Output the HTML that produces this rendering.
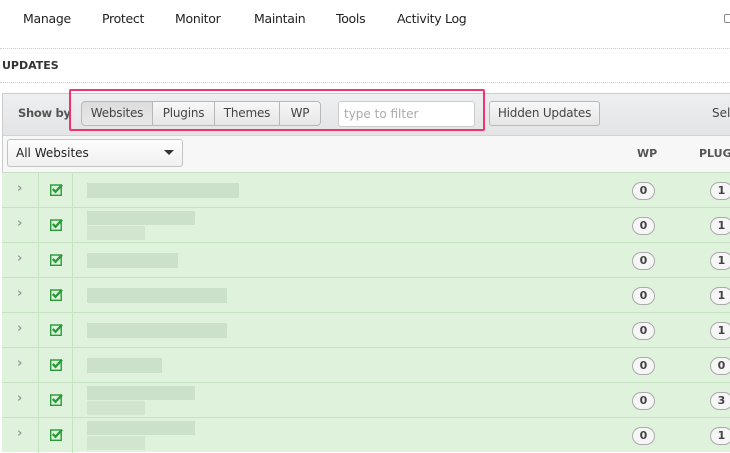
<!DOCTYPE html>
<html><head><meta charset="utf-8"><style>
*{margin:0;padding:0;box-sizing:border-box}
body{width:730px;height:450px;overflow:hidden;background:#fff;font-family:"DejaVu Sans","Liberation Sans",sans-serif;color:#333;position:relative}
.a{position:absolute}
.nav{font-size:12.5px;top:11px;color:#222;letter-spacing:-0.3px}
.dot{left:0;width:730px;border-top:1px dotted #ccc}
.btn{position:absolute;top:101px;height:25px;border:1px solid #b8b8b8;background:linear-gradient(#f7f7f7,#e6e6e6);font-size:12px;line-height:23px;text-align:center;color:#444;letter-spacing:-0.2px}
.row{position:absolute;left:2px;width:728px;height:35px;background:#dff3dc;border-top:1px solid #c8e2c4}
.c1{position:absolute;left:36px;top:0;height:35px;border-left:1px solid #c8e2c4}
.c2{position:absolute;left:70px;top:0;height:35px;border-left:1px solid #c8e2c4}
.arr{position:absolute;left:15px;top:8px;font-size:13px;color:#999;font-weight:bold}
.chk{position:absolute;left:48px;top:10px;width:13px;height:13px}
.bg{position:absolute;width:23px;height:18px;border:1px solid #aaa;border-radius:9px;background:#f6f6f6;font-size:11px;font-weight:bold;text-align:center;line-height:16px;color:#444;top:9px}
.bl{position:absolute;background:#c6dbc4}
</style></head><body>
<div class="a nav" style="left:23px">Manage</div>
<div class="a nav" style="left:102px">Protect</div>
<div class="a nav" style="left:175px">Monitor</div>
<div class="a nav" style="left:254px">Maintain</div>
<div class="a nav" style="left:336px">Tools</div>
<div class="a nav" style="left:397px">Activity Log</div>
<div class="a" style="left:724px;top:14px;width:8px;height:9px;border:1px solid #888;border-radius:2px"></div>
<div class="a dot" style="top:48px"></div>
<div class="a" style="left:2px;top:59px;font-size:11px;font-weight:bold;color:#333">UPDATES</div>
<div class="a dot" style="top:82px"></div>
<div class="a" style="left:2px;top:93px;width:728px;height:43px;background:linear-gradient(#eeeff0,#e3e4e5);border-top:1px solid #ccc;border-left:1px solid #ccc;border-bottom:1px solid #d4d4d4"></div>
<div class="a" style="left:18px;top:106px;font-size:11.5px;font-weight:bold;color:#555;letter-spacing:-0.3px">Show by</div>
<div class="btn" style="left:81px;width:72px;background:linear-gradient(#dcdcdc,#e8e8e8);border-radius:4px 0 0 4px">Websites</div>
<div class="btn" style="left:152px;width:63px">Plugins</div>
<div class="btn" style="left:214px;width:66px">Themes</div>
<div class="btn" style="left:279px;width:42px;border-radius:0 4px 4px 0">WP</div>
<div class="a" style="left:338px;top:101px;width:137px;height:26px;border:1px solid #ccc;background:#fff;border-radius:3px;font-size:12px;color:#aaa;padding:5px 5px">type to filter</div>
<div class="btn" style="left:489px;width:111px;border-radius:3px">Hidden Updates</div>
<div class="a" style="left:712px;top:106px;font-size:12px;color:#444">Sele</div>
<div class="a" style="left:69px;top:89px;width:416px;height:42px;border:2px solid #f0336f;border-radius:2px"></div>
<div class="a" style="left:2px;top:136px;width:728px;height:36px;background:#f7f7f7;border-left:1px solid #ccc"></div>
<div class="a" style="left:7px;top:139px;width:176px;height:28px;border:1px solid #c4c4c4;border-radius:3px;background:linear-gradient(#fdfdfd,#f0f0f0);font-size:12px;padding:6px 8px;color:#222">All Websites</div>
<div class="a" style="left:164px;top:150px;border-left:5px solid transparent;border-right:5px solid transparent;border-top:5px solid #333"></div>
<div class="a" style="left:637px;top:147px;font-size:11px;font-weight:bold;color:#555">WP</div>
<div class="a" style="left:699px;top:147px;font-size:11px;font-weight:bold;color:#555">PLUG</div>
<div class="a" style="left:2px;top:172px;width:1px;height:278px;background:#ccc"></div>
<div id="rows"></div>
<script>
var pl=['1','1','1','1','1','0','3','1'];
var bw=[[152,0],[108,108],[91,0],[140,0],[140,0],[75,0],[108,108],[108,108]];
var h='';
for(var i=0;i<8;i++){var t=172+i*35;
h+='<div class="row" style="top:'+t+'px"><div class="c1"></div><div class="c2"></div><div class="arr">›</div>'+
'<svg class="chk" viewBox="0 0 13 13"><rect x="0.7" y="2" width="10.5" height="10.3" fill="none" stroke="#2a9a3a" stroke-width="1.4"/><path d="M2.8 6 L5.5 8.8 L12 1.8" fill="none" stroke="#2a9a3a" stroke-width="2.4"/></svg>'+
'<div class="bl" style="left:85px;top:'+(bw[i][1]?3:10)+'px;width:'+bw[i][0]+'px;height:'+(bw[i][1]?14:15)+'px;opacity:.75"></div>'+
(bw[i][1]?'<div class="bl" style="left:85px;top:18px;width:'+(bw[i][1]-50)+'px;height:14px;opacity:.55"></div>':'')+
'<div class="bg" style="left:630px">0</div><div class="bg" style="left:708px">'+pl[i]+'</div></div>';}
document.getElementById('rows').innerHTML=h;
</script>
</body></html>
